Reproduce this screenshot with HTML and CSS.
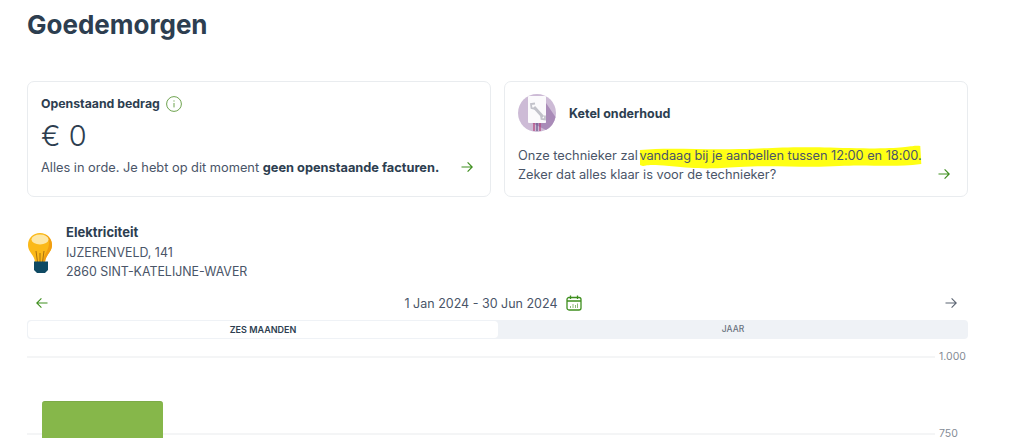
FILE: index.html
```html
<!DOCTYPE html>
<html lang="en">

<head>
    <meta charset="UTF-8">
    <meta name="viewport" content="width=device-width, initial-scale=1.0">
    <title>Goedemorgen</title>
    <link rel="stylesheet" href="styles.css">
</head>

<body>
    <main>
        <h1>Goedemorgen</h1>

        <div class="cards">
            <section class="card">
                <div class="card-title">
                    <b>Openstaand bedrag</b>
                    <svg class="info-icon" viewBox="0 0 16 16" width="16" height="16">
                        <circle cx="8" cy="8" r="7.400" fill="none" stroke="#6ea34f" stroke-width="1"/>
                        <path d="M8 7v4.400M8 4.400v1.200" fill="none" stroke="#6ea34f" stroke-width="1"/>
                    </svg>
                </div>
                <div class="amount">€ 0</div>
                <div class="card-footer">
                    <p>Alles in orde. Je hebt op dit moment <b>geen openstaande facturen.</b></p>
                    <svg class="arrow" viewBox="0 0 12 12" width="12" height="12">
                        <path d="M0.500 6H11M6.600 1.400 11.200 6 6.600 10.600" fill="none" stroke="#3f8f1f" stroke-width="1.200"/>
                    </svg>
                </div>
            </section>

            <section class="card">
                <div class="card-head">
                    <svg class="boiler-icon" viewBox="0 0 38 38" width="38" height="38">
                        <circle cx="19" cy="19" r="19" fill="#cdbbd6"/>
                        <path d="M28 9 37.500 23A19 19 0 0 1 28 36L14 29H28Z" fill="#a98bb8"/>
                        <rect x="10" y="2" width="18" height="27" rx="1" fill="#fbfafc"/>
                        <path d="M16 13 25 23" stroke="#c2c2ca" stroke-width="3" fill="none"/>
                        <path d="M17 9.500 13 10 13.500 14 17 15M23 21 23.500 25 27 25.500 27 21.500" stroke="#c2c2ca" stroke-width="1.800" fill="none"/>
                        <path d="M16 29v8" stroke="#b5487f" stroke-width="1.300"/>
                        <path d="M19 29v8" stroke="#6b5a8e" stroke-width="1.300"/>
                        <path d="M22 29v8" stroke="#b5487f" stroke-width="1.300"/>
                    </svg>
                    <b>Ketel onderhoud</b>
                </div>
                <div class="card-footer card-footer-low">
                    <p>Onze technieker zal <span class="marker"><svg viewBox="0 0 282 24" preserveAspectRatio="none"><path d="M1 5C30 2 60 5 100 4S150 1 210 3 270 0 281 1L282 19C250 23 230 19 200 21S130 20 100 22 60 24 30 21 8 23 1 20Z" fill="#ffff14"/></svg>vandaag bij je aanbellen tussen 12:00 en 18:00.</span><br>Zeker dat alles klaar is voor de technieker?</p>
                    <svg class="arrow" viewBox="0 0 12 12" width="12" height="12">
                        <path d="M0.500 6H11M6.600 1.400 11.200 6 6.600 10.600" fill="none" stroke="#3f8f1f" stroke-width="1.200"/>
                    </svg>
                </div>
            </section>
        </div>

        <section class="meter">
            <svg class="bulb-icon" viewBox="0 0 26 42" width="26" height="42">
                <path d="M13 1C6 1 1 6 1 13c0 7 6 9 7 17h10C19 22 25 20 25 13 25 6 20 1 13 1Z" fill="#fbb919"/>
                <path d="M18 2.500C22.500 4.500 25 8.500 25 13 25 20 19 22 18 30H15.500C17 22 22 18 22 11 22 8 20 5 18 2.500Z" fill="#f19e12"/>
                <ellipse cx="13" cy="7.500" rx="8.500" ry="5" fill="#fde7a6"/>
                <path d="M10.500 30 9 19M15.500 30 17 19M13 30V21" stroke="#a9700f" stroke-width="1" fill="none"/>
                <path d="M7 29.500h14v8.500l-3 3h-8l-3-3Z" fill="#0f4a63"/>
            </svg>
            <div class="meter-info">
                <b>Elektriciteit</b>
                <span>IJZERENVELD, 141</span>
                <span>2860 SINT-KATELIJNE-WAVER</span>
            </div>
        </section>

        <div class="period">
            <svg viewBox="0 0 12 12" width="12" height="12">
                <path d="M11.500 6H1M5.400 1.400 0.800 6 5.400 10.600" fill="none" stroke="#3f8f1f" stroke-width="1.100"/>
            </svg>
            <div class="period-label">
                <span>1 Jan 2024 - 30 Jun 2024</span>
                <svg viewBox="0 0 16 16" width="16" height="16">
                    <rect x="1" y="2.500" width="14" height="12.500" rx="2" fill="none" stroke="#3f8f1f" stroke-width="1.300"/>
                    <path d="M1 6h14M4.500 0.500v3.500M11.500 0.500v3.500" fill="none" stroke="#3f8f1f" stroke-width="1.300"/>
                    <path d="M4.500 13v-2M7 13V9M9.500 13v-3M11.500 13V8.500" fill="none" stroke="#8cb878" stroke-width="1"/>
                </svg>
            </div>
            <svg viewBox="0 0 12 12" width="12" height="12">
                <path d="M0.500 6H11M6.600 1.400 11.200 6 6.600 10.600" fill="none" stroke="#5b6472" stroke-width="1.100"/>
            </svg>
        </div>

        <div class="tabs">
            <div class="tab tab-active">ZES MAANDEN</div>
            <div class="tab">JAAR</div>
        </div>

        <div class="chart">
            <div class="grid-row"><i></i><span>1.000</span></div>
            <div class="grid-row"><i></i><span>750</span></div>
            <div class="bar"></div>
        </div>
    </main>
</body>

</html>
```

FILE: styles.css
```css
body {
    font-family: 'Inter', 'Open Sans', sans-serif;
    margin: 0;
    padding: 0;
    height: 438px;
    overflow: hidden;
    background-color: #FFF;
    color: #4a5568;
}

b {
    color: #2d3e50;
    font-weight: 700;
}

main {
    width: 941px;
    margin-left: 27px;
}

h1 {
    margin: 0;
    padding-top: 9px;
    height: 81px;
    box-sizing: border-box;
    font-size: 26px;
    line-height: 32px;
    font-weight: 700;
    color: #2d3e50;
}

.cards {
    display: flex;
    gap: 13px;
}

.card {
    flex: 1;
    height: 116px;
    box-sizing: border-box;
    padding: 13px 13px;
    border: 1px solid #e9ecef;
    border-radius: 7px;
    display: flex;
    flex-direction: column;
}

.card-title {
    display: flex;
    align-items: center;
    gap: 6px;
    font-size: 12.300px;
    line-height: 18px;
}

.amount {
    margin-top: 5px;
    font-size: 29px;
    line-height: 36px;
    font-weight: 300;
    color: #2d3e50;
}

.card-footer {
    display: flex;
    justify-content: space-between;
    align-items: flex-end;
    margin-top: 4px;
    padding-right: 4px;
    font-size: 12.800px;
    line-height: 19px;
}

.card-footer-low {
    margin-top: 14px;
}

.card-footer p {
    margin: 0;
}

.card-footer .arrow {
    margin-bottom: 4px;
}

.card-head {
    display: flex;
    align-items: center;
    gap: 13px;
    margin-top: -1px;
    font-size: 12.500px;
}

.boiler-icon {
    flex: none;
}

.marker {
    position: relative;
    z-index: 0;
    margin-left: -2px;
    letter-spacing: -0.05px;
    white-space: nowrap;
}

.marker svg {
    position: absolute;
    left: 0;
    top: -3px;
    width: 100%;
    height: 24px;
    z-index: -1;
}

.meter {
    display: flex;
    gap: 13px;
    margin-top: 26px;
    height: 57px;
}

.bulb-icon {
    margin-top: 9px;
}

.meter-info {
    display: flex;
    flex-direction: column;
    font-size: 12.400px;
    line-height: 19px;
}

.meter-info b {
    margin-bottom: 1px;
    font-size: 13px;
}

.period {
    display: flex;
    justify-content: space-between;
    align-items: center;
    height: 20px;
    margin-top: 13px;
    padding: 0 11px 0 9px;
}

.period-label {
    display: flex;
    align-items: center;
    gap: 8px;
    margin-right: 7px;
    font-size: 12.500px;
}

.tabs {
    display: flex;
    margin-top: 7px;
    height: 19px;
    padding: 1px 0 1px 1px;
    box-sizing: border-box;
    background-color: #eff2f6;
    border-radius: 4px;
}

.tab {
    flex: 1;
    text-align: center;
    font-size: 8.500px;
    line-height: 17px;
    font-weight: 500;
    color: #6b7280;
}

.tab-active {
    background-color: #FFF;
    border-radius: 4px;
    font-size: 9px;
    font-weight: 600;
    color: #2d3e50;
}

.chart {
    position: relative;
    margin-top: 11px;
    height: 88px;
    overflow: hidden;
}

.grid-row {
    display: flex;
    align-items: center;
    gap: 4px;
    height: 14px;
    margin-bottom: 63px;
    font-size: 10.500px;
    color: #858c96;
}

.grid-row i {
    flex: 1;
    height: 2px;
    background-color: #f4f5f6;
}

.grid-row span {
    width: 29px;
    line-height: 8px;
}

.bar {
    position: absolute;
    left: 15px;
    top: 51px;
    width: 121px;
    height: 37px;
    background-color: #86b74a;
    border-top: 1px solid #7dab47;
    border-radius: 3px 3px 0 0;
}
```
